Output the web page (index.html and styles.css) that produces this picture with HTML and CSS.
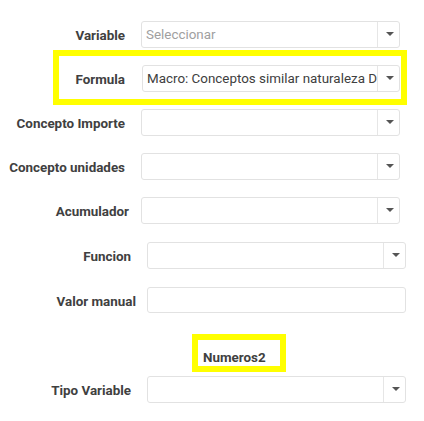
FILE: index.html
```html
<!DOCTYPE html>
<html lang="es">
<head>
<meta charset="utf-8">
<title>Formulario</title>
<link rel="stylesheet" href="styles.css">
</head>
<body>
<div class="form">
  <div class="group group-a">
    <div class="row">
      <label class="label">Variable</label>
      <div class="select"><span class="select-text placeholder">Seleccionar</span><span class="select-btn"><i class="caret"></i></span></div>
    </div>
    <div class="row row-highlight">
      <label class="label">Formula</label>
      <div class="select"><span class="select-text">Macro: Conceptos similar naturaleza Devengos</span><span class="select-btn"><i class="caret"></i></span></div>
    </div>
    <div class="row">
      <label class="label">Concepto Importe</label>
      <div class="select"><span class="select-text"></span><span class="select-btn"><i class="caret"></i></span></div>
    </div>
    <div class="row">
      <label class="label">Concepto unidades</label>
      <div class="select"><span class="select-text"></span><span class="select-btn"><i class="caret"></i></span></div>
    </div>
    <div class="row">
      <label class="label label-acum">Acumulador</label>
      <div class="select"><span class="select-text"></span><span class="select-btn"><i class="caret"></i></span></div>
    </div>
  </div>
  <div class="group group-b">
    <div class="row">
      <label class="label">Funcion</label>
      <div class="select"><span class="select-text"></span><span class="select-btn"><i class="caret"></i></span></div>
    </div>
    <div class="row row-input">
      <label class="label label-valor">Valor manual</label>
      <div class="input"></div>
    </div>
    <div class="heading-wrap">
      <span class="heading">Numeros2</span>
    </div>
    <div class="row">
      <label class="label">Tipo Variable</label>
      <div class="select"><span class="select-text"></span><span class="select-btn"><i class="caret"></i></span></div>
    </div>
  </div>
</div>
</body>
</html>
```
FILE: styles.css
```css
* { box-sizing: border-box; }

body {
  margin: 0;
  background: #ffffff;
  font-family: Roboto, "Liberation Sans", sans-serif;
  font-size: 13.4px;
  color: #333333;
}

.form {
  display: flex;
  flex-direction: column;
  padding-top: 21px;
}

.group {
  display: flex;
  flex-direction: column;
}

.group-a { gap: 17px; }

.group-b {
  gap: 18px;
  margin-top: 18px;
}

.row {
  display: flex;
  align-items: center;
  height: 27px;
  width: 400px;
}

.group-b .row { width: 406px; }

.row-input { height: 26px; }

.label {
  flex: none;
  width: 125px;
  margin-right: 16px;
  padding-top: 2px;
  text-align: right;
  font-weight: bold;
  color: #404040;
  white-space: nowrap;
}

.label-acum { width: 129px; margin-right: 12px; }

.group-b .label { width: 131px; }

.group-b .label-valor { width: 136px; margin-right: 11px; }

.select {
  flex: none;
  display: flex;
  width: 259px;
  height: 27px;
  border: 1px solid #e2e2e2;
  border-radius: 3px;
  background: #ffffff;
}

.select-text {
  flex: 1;
  min-width: 0;
  padding-left: 4px;
  line-height: 25px;
  white-space: nowrap;
  overflow: hidden;
  text-overflow: clip;
  color: #404040;
}

.placeholder { color: #a0a0a0; }

.select-btn {
  flex: none;
  width: 22px;
  border-left: 1px solid #e6e6e6;
  display: flex;
  align-items: center;
  justify-content: center;
  padding-left: 2px;
  padding-bottom: 2px;
}

.caret {
  width: 0;
  height: 0;
  border-left: 4px solid transparent;
  border-right: 4px solid transparent;
  border-top: 4px solid #555555;
}

.input {
  flex: none;
  width: 259px;
  height: 26px;
  border: 1px solid #e2e2e2;
  border-radius: 3px;
  background: #ffffff;
}

.row-highlight { position: relative; }

.row-highlight .select { margin-left: 1px; width: 258px; }

.row-highlight::before {
  content: "";
  position: absolute;
  top: -15px;
  bottom: -13px;
  left: 53px;
  right: -7px;
  border: 6px solid #ffff00;
  pointer-events: none;
}

.heading-wrap {
  padding-left: 192px;
  margin-top: 3px;
  margin-bottom: -14px;
}

.heading {
  display: inline-block;
  border: 6px solid #ffff00;
  padding: 10px 14px 0 5px;
  line-height: 16px;
  font-weight: bold;
  color: #404040;
}
```
